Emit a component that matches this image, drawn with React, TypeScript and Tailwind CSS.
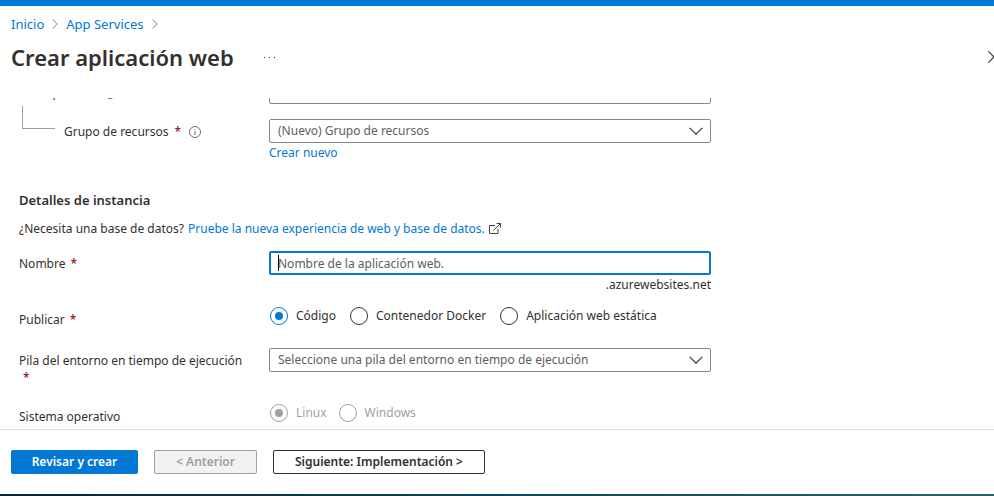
import type { ReactNode } from 'react';

function Required() {
  return <span className="pl-0.5 font-semibold text-[#a4262c]" aria-hidden="true">*</span>;
}

function InfoIcon() {
  return (
    <svg viewBox="0 0 12 12" className="ml-1 size-3 shrink-0" fill="none" stroke="#605e5c" aria-hidden="true">
      <circle cx="6" cy="6" r="5.5" strokeWidth="0.9" />
      <path d="M6 5v4M6 3v1" strokeWidth="0.9" />
    </svg>
  );
}

function Crumb() {
  return (
    <svg viewBox="0 0 6 10" className="h-2.5 w-1.5" fill="none" stroke="#8a8886" aria-hidden="true">
      <path d="M0.5 0.5 5.3 5 0.5 9.5" />
    </svg>
  );
}

function Row({ label, className = '', children }: { label: ReactNode; className?: string; children: ReactNode }) {
  return (
    <div className={`flex items-start ${className}`}>
      <div className="w-[250px] shrink-0 pt-1">{label}</div>
      <div className="min-w-0 max-w-[442px] flex-1">{children}</div>
    </div>
  );
}

function Dropdown({ id, text }: { id: string; text: string }) {
  return (
    <div className="relative">
      <select
        id={id}
        className="block h-6 w-full appearance-none rounded-xs border border-[#8a8886] bg-white pr-8 pl-2 leading-[18px] text-[#605e5c] outline-none"
      >
        <option>{text}</option>
      </select>
      <svg
        viewBox="0 0 14 8"
        className="pointer-events-none absolute top-2 right-2 h-2 w-3.5"
        fill="none"
        stroke="#323130"
        aria-hidden="true"
      >
        <path d="M0.7 0.9 7 7.2 13.3 0.9" strokeWidth="1.1" />
      </svg>
    </div>
  );
}

function Radio({ name, text, checked, disabled }: { name: string; text: string; checked?: boolean; disabled?: boolean }) {
  return (
    <label className={`flex h-[18px] items-center gap-2 ${disabled ? 'text-[#a19f9d]' : ''}`}>
      <input
        type="radio"
        name={name}
        defaultChecked={checked}
        disabled={disabled}
        className="grid size-[18px] shrink-0 appearance-none place-items-center rounded-full border border-[#323130] before:size-2 before:rounded-full checked:border-[#0078d4] checked:before:bg-[#0078d4] disabled:border-[#a19f9d] disabled:checked:before:bg-[#a19f9d]"
      />
      {text}
    </label>
  );
}

export default function App() {
  return (
    <div className="flex h-screen flex-col bg-white font-['Noto_Sans','Open_Sans',sans-serif] text-xs leading-[18px] text-[#323130]">
      <div className="h-1.5 shrink-0 bg-[#0078d4]" />
      <header className="h-[92px] shrink-0 pt-[9px] pl-[11px]">
        <nav className="flex items-center gap-2 text-[13px] leading-[18px]" aria-label="Ruta">
          <a href="#inicio" className="text-[#0078d4]">Inicio</a>
          <Crumb />
          <a href="#app-services" className="text-[#0078d4]">App Services</a>
          <Crumb />
        </nav>
        <div className="mt-2 flex items-center">
          <h1 className="text-[22px] leading-8 font-semibold">Crear aplicación web</h1>
          <button type="button" aria-label="Más" className="ml-[30px] flex gap-1">
            <span className="size-px bg-[#323130]" />
            <span className="size-px bg-[#323130]" />
            <span className="size-px bg-[#323130]" />
          </button>
          <button type="button" aria-label="Cerrar" className="ml-auto">
            <svg viewBox="0 0 6 12" className="h-3 w-1.5" fill="none" stroke="#323130">
              <path d="M0.3 0.3 6 6 0.3 11.7" strokeWidth="1.1" />
            </svg>
          </button>
        </div>
      </header>

      <main className="min-h-0 flex-1 overflow-hidden pl-[19px]">
        <Row
          className="-mt-[18px]"
          label={
            <label htmlFor="suscripcion" className="flex items-center gap-1">
              Suscripción <Required />
              <InfoIcon />
            </label>
          }
        >
          <Dropdown id="suscripcion" text="" />
        </Row>

        <Row
          className="mt-[15px]"
          label={
            <div className="flex items-start pl-[3px]">
              <span className="-mt-[17px] h-[23px] w-[33px] border-b border-l border-[#a19f9d]" />
              <label htmlFor="grupo" className="ml-[9px] flex items-center gap-1">
                Grupo de recursos <Required />
                <InfoIcon />
              </label>
            </div>
          }
        >
          <Dropdown id="grupo" text="(Nuevo) Grupo de recursos" />
          <a href="#crear" className="block leading-5 text-[#0078d4]">Crear nuevo</a>
        </Row>

        <h2 className="mt-7 text-[13px] leading-[18px] font-semibold">Detalles de instancia</h2>
        <p className="mt-[11px] flex items-center gap-1">
          ¿Necesita una base de datos?
          <a href="#base" className="flex items-center gap-1 text-[#0078d4]">
            Pruebe la nueva experiencia de web y base de datos.
            <svg viewBox="0 0 12 12" className="size-3" fill="none" stroke="#323130" strokeWidth="0.9" aria-hidden="true">
              <path d="M6 2.5H.5v8H9V6M7.5.5h4v4M11.5.5 4.5 7.5" />
            </svg>
          </a>
        </p>

        <Row
          className="mt-[13px]"
          label={<label htmlFor="nombre">Nombre <Required /></label>}
        >
          <div className="relative">
            <input
              id="nombre"
              type="text"
              placeholder="Nombre de la aplicación web."
              className="block h-6 w-full rounded-xs border-2 border-[#0078d4] px-[7px] leading-[18px] outline-none placeholder:text-[#605e5c]"
            />
            <span className="absolute top-1 left-[9px] h-4 w-px bg-black" />
          </div>
          <div className="text-right leading-5">.azurewebsites.net</div>
        </Row>

        <Row className="mt-3" label={<span>Publicar <Required /></span>}>
          <div role="radiogroup" aria-label="Publicar" className="flex gap-3.5 pl-px">
            <Radio name="publicar" text="Código" checked />
            <Radio name="publicar" text="Contenedor Docker" />
            <Radio name="publicar" text="Aplicación web estática" />
          </div>
        </Row>

        <Row
          className="mt-[19px]"
          label={
            <label htmlFor="pila" className="block">
              Pila del entorno en tiempo de ejecución
              <span className="block pl-0.5 leading-4"><Required /></span>
            </label>
          }
        >
          <Dropdown id="pila" text="Seleccione una pila del entorno en tiempo de ejecución" />
        </Row>

        <Row className="mt-[18px]" label="Sistema operativo">
          <div role="radiogroup" aria-label="Sistema operativo" className="flex gap-3 pl-px">
            <Radio name="sistema" text="Linux" checked disabled />
            <Radio name="sistema" text="Windows" disabled />
          </div>
        </Row>
      </main>

      <footer className="flex shrink-0 gap-4 border-t border-[#dcdcdc] px-[11px] py-5 font-semibold">
        <button type="button" className="h-6 w-[127px] rounded-xs bg-[#0078d4] text-white">Revisar y crear</button>
        <button type="button" disabled className="h-6 w-[103px] rounded-xs border border-[#a19f9d] bg-[#f3f2f1] text-[#a19f9d]">
          &lt; Anterior
        </button>
        <button type="button" className="h-6 w-[212px] rounded-xs border border-[#323130] bg-white">
          Siguiente: Implementación &gt;
        </button>
      </footer>
      <div className="h-0.5 shrink-0 bg-linear-to-r from-[#0a2238] via-[#0b4562] to-[#2f5f68]" />
    </div>
  );
}
